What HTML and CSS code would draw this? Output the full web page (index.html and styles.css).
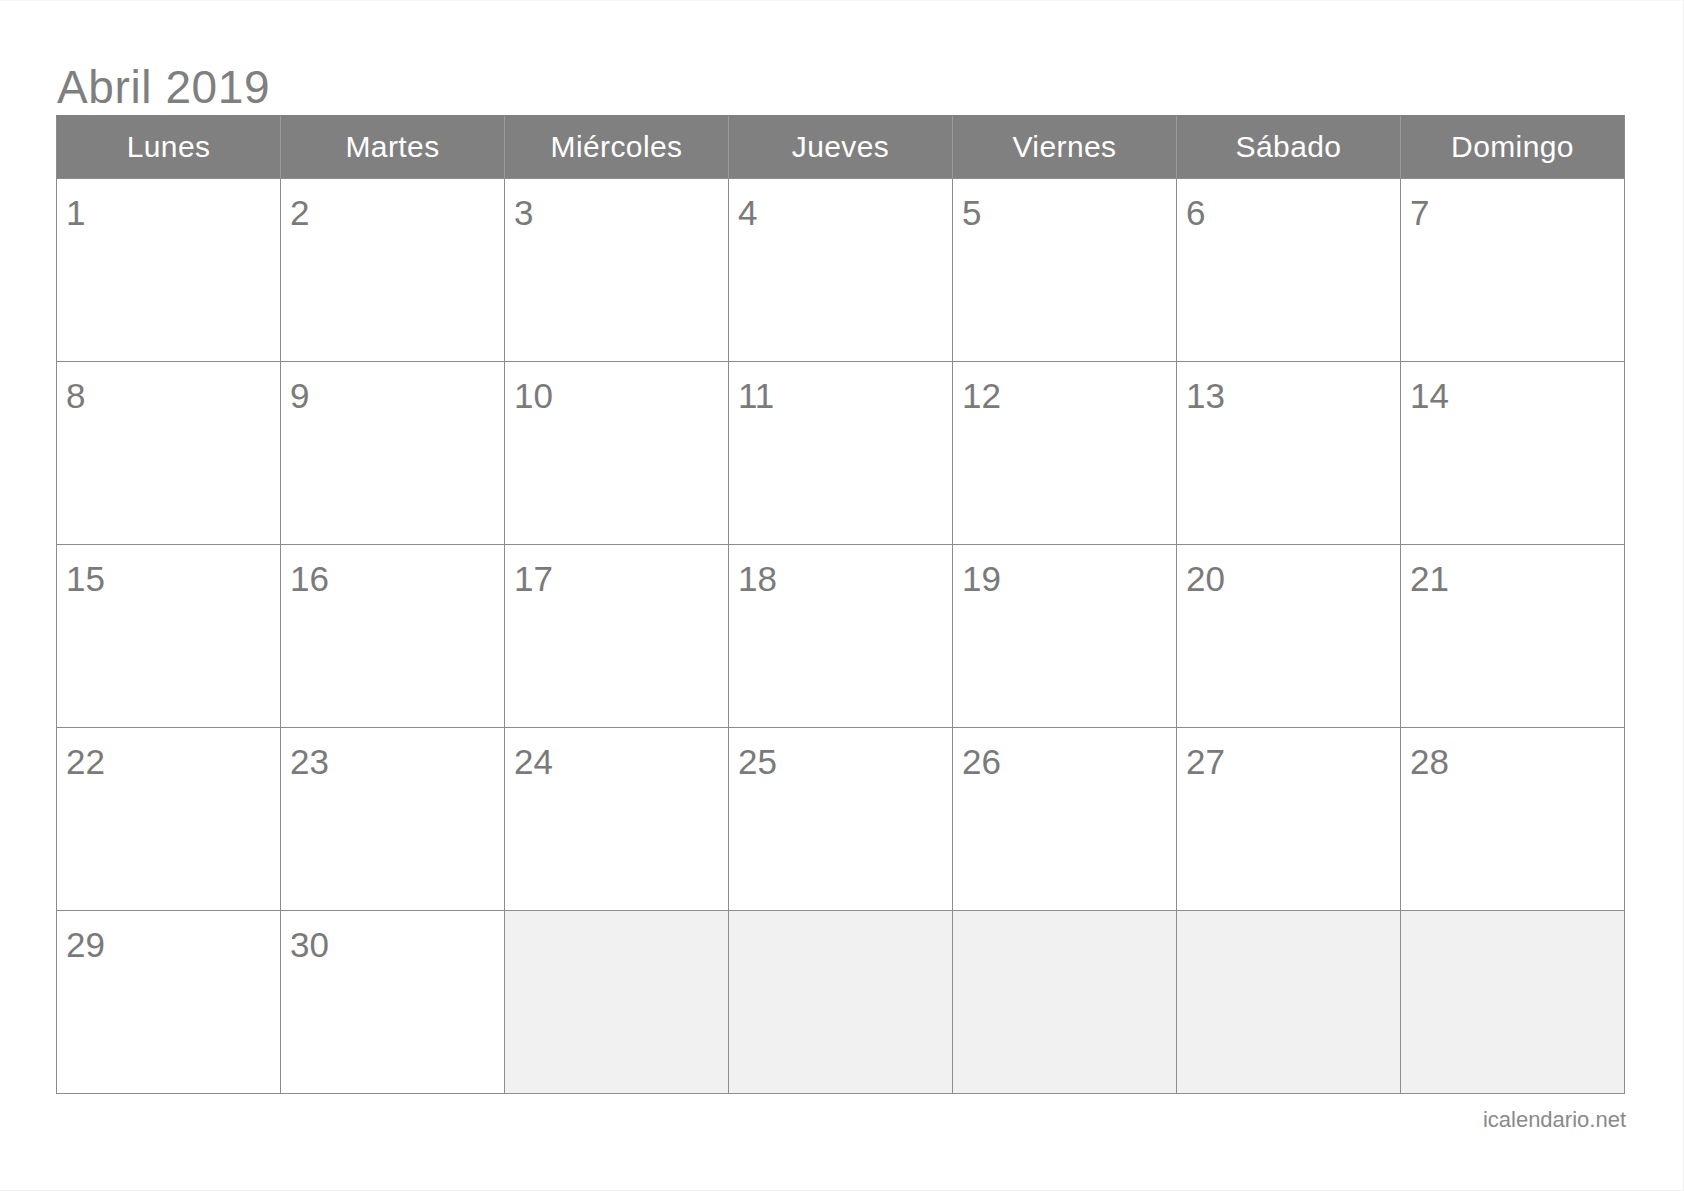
FILE: index.html
```html
<!DOCTYPE html>
<html lang="es">
<head>
<meta charset="utf-8">
<title>Abril 2019</title>
<link rel="stylesheet" href="styles.css">
</head>
<body>
<div class="page">
  <h1 class="title">Abril 2019</h1>
  <div class="calendar">
    <div class="head">Lunes</div>
    <div class="head">Martes</div>
    <div class="head">Miércoles</div>
    <div class="head">Jueves</div>
    <div class="head">Viernes</div>
    <div class="head">Sábado</div>
    <div class="head">Domingo</div>

    <div class="day">1</div><div class="day">2</div><div class="day">3</div><div class="day">4</div><div class="day">5</div><div class="day">6</div><div class="day">7</div>
    <div class="day">8</div><div class="day">9</div><div class="day">10</div><div class="day">11</div><div class="day">12</div><div class="day">13</div><div class="day">14</div>
    <div class="day">15</div><div class="day">16</div><div class="day">17</div><div class="day">18</div><div class="day">19</div><div class="day">20</div><div class="day">21</div>
    <div class="day">22</div><div class="day">23</div><div class="day">24</div><div class="day">25</div><div class="day">26</div><div class="day">27</div><div class="day">28</div>
    <div class="day">29</div><div class="day">30</div><div class="day empty"></div><div class="day empty"></div><div class="day empty"></div><div class="day empty"></div><div class="day empty"></div>
  </div>
  <div class="footer">icalendario.net</div>
</div>
</body>
</html>
```
FILE: styles.css
```css
html, body {
  margin: 0;
  padding: 0;
  background: #ffffff;
}

.page {
  box-sizing: border-box;
  width: 1684px;
  height: 1191px;
  padding: 63px 0 0 56px;
  border-right: 1px solid #f0f0f0;
  border-bottom: 1px solid #f0f0f0;
  border-top: 1px solid #f7f7f7;
  font-family: "Liberation Sans", Arial, Helvetica, sans-serif;
}

.title {
  margin: 0 0 5px 0;
  font-size: 46px;
  line-height: 46px;
  font-weight: normal;
  letter-spacing: 0.6px;
  color: #7f7f7f;
  padding-left: 1px;
}

.calendar {
  display: grid;
  grid-template-columns: repeat(7, 223px);
  grid-template-rows: 62px repeat(5, 182px);
  gap: 1px;
  width: max-content;
  background: #8c8c8c;
  border: 1px solid #8c8c8c;
  border-top-color: #808080;
}

.head {
  background: #808080;
  color: #ffffff;
  font-size: 30px;
  line-height: 62px;
  letter-spacing: 0.4px;
  text-align: center;
  box-shadow: -1px 0 0 #9a9a9a;
}

.head:first-child {
  box-shadow: none;
}

.day {
  background: #ffffff;
  color: #7a7a7a;
  font-size: 35px;
  line-height: 35px;
  padding: 16px 0 0 9px;
}

.day.empty {
  background: #f1f1f1;
}

.footer {
  width: 1570px;
  margin-top: 14px;
  text-align: right;
  font-size: 22px;
  line-height: 24px;
  color: #8a8a8a;
}
```
